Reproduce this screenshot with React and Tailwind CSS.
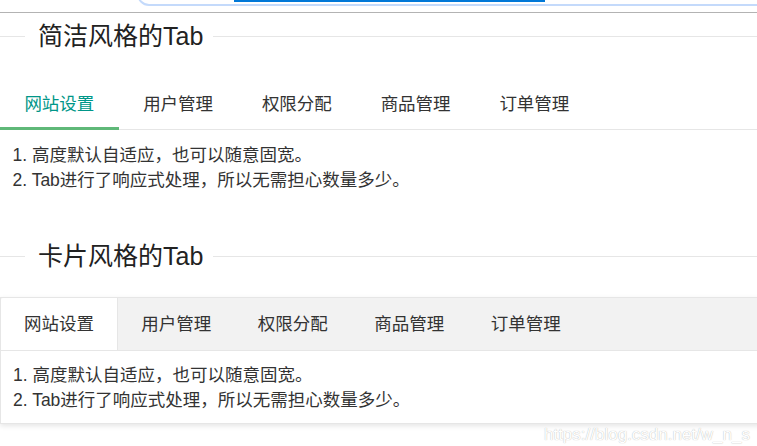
import React from "react";

const tabs = ["网站设置", "用户管理", "权限分配", "商品管理", "订单管理"];

function Legend({ title }) {
  return (
    <div className="flex h-[30px] items-center">
      <div className="h-px w-[25px] bg-[#e6e6e6]" />
      <div className="pl-[13px] pr-[10px] text-[25px] leading-[30px] text-[#222]">{title}</div>
      <div className="h-px flex-1 bg-[#e6e6e6]" />
    </div>
  );
}

function Notes() {
  return (
    <div className="text-[17.5px] leading-[25px] text-[#333]">
      <p>1. 高度默认自适应，也可以随意固宽。</p>
      <p>2. Tab进行了响应式处理，所以无需担心数量多少。</p>
    </div>
  );
}

export default function App() {
  return (
    <div
      className="relative min-h-[446px] overflow-hidden bg-white"
      style={{ fontFamily: '"Liberation Sans", "Noto Sans CJK SC", sans-serif' }}
    >
      {/* browser chrome fragment */}
      <div className="relative h-[13px] overflow-hidden border-b border-[#b3b3b3]">
        <div className="absolute -top-[20px] left-[137px] -right-[20px] h-[26px] rounded-[12px] border-2 border-[#c4dafb]" />
        <div className="absolute left-[234px] top-0 h-[2px] w-[311px] bg-[#0078d7]" />
      </div>

      <div className="mt-[8px]">
        <Legend title="简洁风格的Tab" />
      </div>

      {/* brief tab */}
      <div className="mt-[28px]">
        <div className="flex h-[51px] border-b border-[#e6e6e6]">
          {tabs.map((t, i) => (
            <div
              key={t}
              className={
                "relative flex w-[118.75px] items-center justify-center text-[17.5px] " +
                (i === 0 ? "text-[#009688]" : "text-[#333]")
              }
            >
              {t}
              {i === 0 && <div className="absolute -bottom-px left-0 right-0 h-[3px] bg-[#5fb878]" />}
            </div>
          ))}
        </div>
        <div className="px-[12.5px] py-[12.5px]">
          <Notes />
        </div>
      </div>

      <div className="mt-[36px]">
        <Legend title="卡片风格的Tab" />
      </div>

      {/* card tab */}
      <div className="-mr-[4px] mt-[26px] border border-[#e6e6e6] shadow-[0_2px_5px_0_rgba(0,0,0,0.1)]">
        <div className="flex h-[53px] border-b border-[#e6e6e6] bg-[#f2f2f2]">
          {tabs.map((t, i) => (
            <div
              key={t}
              className={
                "flex items-center justify-center text-[17.5px] text-[#333] " +
                (i === 0 ? "w-[117px] rounded-tl-[2px] border-r border-[#e6e6e6] bg-white" : "w-[116.5px]")
              }
            >
              {t}
            </div>
          ))}
        </div>
        <div className="pb-[10px] pl-[12px] pt-[12px]">
          <Notes />
        </div>
      </div>

      <div className="absolute right-[7px] top-[425px] text-[17px] leading-[20px] text-white [text-shadow:0_0_1px_rgba(0,0,0,0.35)]">
        https://blog.csdn.net/w_n_s
      </div>
    </div>
  );
}
